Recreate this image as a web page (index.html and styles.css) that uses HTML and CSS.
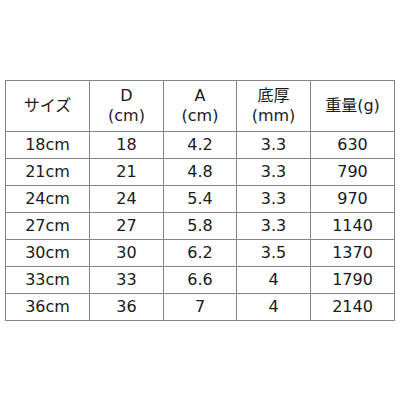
FILE: index.html
```html
<!DOCTYPE html>
<html lang="ja">
<head>
<meta charset="utf-8">
<link rel="stylesheet" href="styles.css">
</head>
<body>
<table class="spec">
  <colgroup>
    <col class="c1"><col class="c2"><col class="c3"><col class="c4"><col class="c5">
  </colgroup>
  <tr class="head">
    <td>サイズ</td>
    <td>D<br>(cm)</td>
    <td>A<br>(cm)</td>
    <td>底厚<br>(mm)</td>
    <td>重量(g)</td>
  </tr>
  <tr><td>18cm</td><td>18</td><td>4.2</td><td>3.3</td><td>630</td></tr>
  <tr><td>21cm</td><td>21</td><td>4.8</td><td>3.3</td><td>790</td></tr>
  <tr><td>24cm</td><td>24</td><td>5.4</td><td>3.3</td><td>970</td></tr>
  <tr><td>27cm</td><td>27</td><td>5.8</td><td>3.3</td><td>1140</td></tr>
  <tr><td>30cm</td><td>30</td><td>6.2</td><td>3.5</td><td>1370</td></tr>
  <tr><td>33cm</td><td>33</td><td>6.6</td><td>4</td><td>1790</td></tr>
  <tr><td>36cm</td><td>36</td><td>7</td><td>4</td><td>2140</td></tr>
</table>
</body>
</html>
```

FILE: styles.css
```css
html, body {
  margin: 0;
  padding: 0;
  background: #ffffff;
}
body {
  padding: 80px 0 0 5px;
  font-family: "DejaVu Sans", "Noto Sans CJK JP", sans-serif;
  color: #1a1a1a;
}
.spec {
  border-collapse: collapse;
  table-layout: fixed;
  width: 390px;
  font-size: 16px;
}
.c1 { width: 84px; }
.c2 { width: 74px; }
.c3 { width: 73px; }
.c4 { width: 74px; }
.c5 { width: 84px; }
.spec td {
  border: 1px solid #858585;
  padding: 0;
  height: 26px;
  line-height: 20px;
  text-align: center;
  vertical-align: middle;
}
.spec .head td {
  height: 50px;
}
```
